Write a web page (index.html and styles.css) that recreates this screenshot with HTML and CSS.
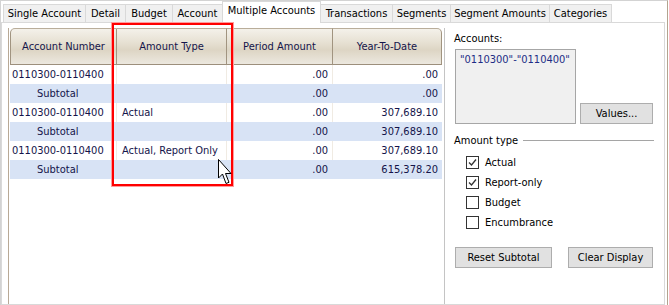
FILE: index.html
```html
<!DOCTYPE html>
<html>
<head>
    <title>Multiple Accounts</title>
    <link rel="stylesheet" href="styles.css">
</head>
<body>
    <div class="window">
        <div class="tabs">
            <div class="tab w-single">Single Account</div>
            <div class="tab w-detail">Detail</div>
            <div class="tab w-budget">Budget</div>
            <div class="tab w-account">Account</div>
            <div class="tab active w-multi">Multiple Accounts</div>
            <div class="tab w-trans">Transactions</div>
            <div class="tab w-seg">Segments</div>
            <div class="tab w-segamt">Segment Amounts</div>
            <div class="tab w-cat">Categories</div>
        </div>

        <div class="panel">
            <div class="grid-area">
                <table class="grid">
                    <tr class="head">
                        <th class="c1 first">Account Number</th>
                        <th class="c2">Amount Type</th>
                        <th class="c3">Period Amount</th>
                        <th class="c4 last">Year-To-Date</th>
                    </tr>
                    <tr class="row">
                        <td>0110300-0110400</td>
                        <td class="type"></td>
                        <td class="num">.00</td>
                        <td class="num">.00</td>
                    </tr>
                    <tr class="row subtotal">
                        <td class="sub">Subtotal</td>
                        <td></td>
                        <td class="num">.00</td>
                        <td class="num">.00</td>
                    </tr>
                    <tr class="row">
                        <td>0110300-0110400</td>
                        <td class="type">Actual</td>
                        <td class="num">.00</td>
                        <td class="num">307,689.10</td>
                    </tr>
                    <tr class="row subtotal">
                        <td class="sub">Subtotal</td>
                        <td></td>
                        <td class="num">.00</td>
                        <td class="num">307,689.10</td>
                    </tr>
                    <tr class="row">
                        <td>0110300-0110400</td>
                        <td class="type">Actual, Report Only</td>
                        <td class="num">.00</td>
                        <td class="num">307,689.10</td>
                    </tr>
                    <tr class="row subtotal">
                        <td class="sub">Subtotal</td>
                        <td></td>
                        <td class="num">.00</td>
                        <td class="num">615,378.20</td>
                    </tr>
                </table>
            </div>

            <div class="side">
                <div class="label">Accounts:</div>
                <div class="accounts-row">
                    <div class="listbox">"0110300"-"0110400"</div>
                    <button class="btn values">Values...</button>
                </div>

                <div class="group-title">
                    <span>Amount type</span>
                    <div class="rule"></div>
                </div>
                <div class="checks">
                    <div class="check">
                        <svg class="box" width="13" height="13" viewBox="0 0 13 13">
                            <rect x="0.5" y="0.5" width="12" height="12" fill="#fff" stroke="#333"/>
                            <polyline points="3,6.5 5.5,9 10,3.5" fill="none" stroke="#333" stroke-width="1.3"/>
                        </svg>
                        <span>Actual</span>
                    </div>
                    <div class="check">
                        <svg class="box" width="13" height="13" viewBox="0 0 13 13">
                            <rect x="0.5" y="0.5" width="12" height="12" fill="#fff" stroke="#333"/>
                            <polyline points="3,6.5 5.5,9 10,3.5" fill="none" stroke="#333" stroke-width="1.3"/>
                        </svg>
                        <span>Report-only</span>
                    </div>
                    <div class="check">
                        <svg class="box" width="13" height="13" viewBox="0 0 13 13">
                            <rect x="0.5" y="0.5" width="12" height="12" fill="#fff" stroke="#333"/>
                        </svg>
                        <span>Budget</span>
                    </div>
                    <div class="check">
                        <svg class="box" width="13" height="13" viewBox="0 0 13 13">
                            <rect x="0.5" y="0.5" width="12" height="12" fill="#fff" stroke="#333"/>
                        </svg>
                        <span>Encumbrance</span>
                    </div>
                </div>

                <div class="buttons">
                    <button class="btn reset">Reset Subtotal</button>
                    <button class="btn clear">Clear Display</button>
                </div>
            </div>
        </div>

        <!-- annotation drawn over the screenshot -->
        <div class="highlight"></div>
        <svg class="cursor" width="16" height="28" viewBox="0 0 16 28">
            <polygon points="0.5,0.5 0.5,19 4.5,15 8,24.5 11,23.3 7.5,14.5 13,14.5" fill="#fff" stroke="#000" stroke-width="1"/>
        </svg>
    </div>
</body>
</html>
```

FILE: styles.css
```css
body {
    margin: 0;
    background-color: #fff;
    font-family: "DejaVu Sans Condensed", "Liberation Sans", sans-serif;
    font-size: 11px;
    color: #000;
}

.window {
    position: relative;
    width: 668px;
    height: 305px;
    box-sizing: border-box;
    border-top: 1px solid #d3d3d3;
    border-left: 1px solid #d3d3d3;
    border-right: 1px solid #b3a48f;
    display: flex;
    flex-direction: column;
}

/* tab strip */
.tabs {
    display: flex;
    align-items: flex-end;
    height: 21px;
    padding-left: 2px;
    position: relative;
    z-index: 1;
}

.tab {
    box-sizing: border-box;
    height: 18px;
    line-height: 17px;
    text-align: center;
    background-color: #f0f0f0;
    border: 1px solid #d9d9d9;
    border-bottom: none;
    margin-right: -1px;
    white-space: nowrap;
}

.tab.active {
    height: 22px;
    line-height: 18px;
    background-color: #fff;
    margin-bottom: -1px;
    position: relative;
}

.w-single { width: 83px; }
.w-detail { width: 41px; }
.w-budget { width: 48px; }
.w-account { width: 51px; }
.w-multi { width: 99px; }
.w-trans { width: 73px; }
.w-seg { width: 59px; }
.w-segamt { width: 100px; }
.w-cat { width: 63px; }

/* tab page */
.panel {
    flex: 1;
    display: flex;
    border: 1px solid #d9d9d9;
    margin-right: 2px;
    min-height: 0;
}

.grid-area {
    width: 434px;
    margin-left: 6px;
    margin-top: 5px;
    padding-left: 1px;
    border-left: 1px solid #b8a996;
    border-right: 1px solid #c4c4c4;
}

.grid {
    border-collapse: separate;
    border-spacing: 0;
    width: 432px;
    table-layout: fixed;
    color: #14144a;
}

.head th {
    height: 37px;
    padding: 0;
    font-weight: normal;
    text-align: center;
    background: linear-gradient(#f4f1ea 0%, #e6e0d2 40%, #ddd5c4 60%, #ece8df 100%);
    border-top: 1px solid #b9ad9a;
    border-bottom: 1px solid #9c8f7c;
    border-right: 1px solid #a19480;
    box-sizing: border-box;
}

.head .first {
    border-left: 1px solid #a19480;
    border-top-left-radius: 5px;
}

.head .last {
    border-top-right-radius: 5px;
}

.c1 { width: 107px; }
.c2 { width: 110px; }
.c3 { width: 106px; }
.c4 { width: 109px; }

.row td {
    height: 19px;
    padding: 0 0 0 2px;
    white-space: nowrap;
    overflow: hidden;
    border-right: 1px solid #f0ebe3;
}

.row td:last-child {
    border-right: none;
}

.row td.type {
    padding-left: 5px;
}

.row td.num {
    text-align: right;
    padding: 0 4px 0 0;
}

.subtotal td {
    background-color: #d8e3f5;
    border-right-color: #d8e3f5;
}

.row td.sub {
    padding-left: 27px;
}

/* right side controls */
.side {
    flex: 1;
    padding: 9px 0 0 9px;
}

.label {
    line-height: 13px;
}

.accounts-row {
    display: flex;
    align-items: flex-end;
    margin-top: 4px;
}

.listbox {
    box-sizing: border-box;
    width: 121px;
    height: 75px;
    margin-left: 1px;
    padding: 3px 0 0 4px;
    background-color: #f0f0f0;
    border: 1px solid #a6a6a6;
    color: #1d2d86;
}

.btn {
    box-sizing: border-box;
    height: 21px;
    padding: 0;
    font-family: inherit;
    font-size: 11px;
    color: #000;
    background-color: #e1e1e1;
    border: 1px solid #adadad;
}

.values {
    width: 73px;
    margin-left: 4px;
}

.group-title {
    display: flex;
    align-items: center;
    height: 13px;
    margin-top: 10px;
    margin-right: 10px;
}

.rule {
    flex: 1;
    height: 1px;
    margin-left: 5px;
    margin-top: 1px;
    background-color: #a5a5a5;
    border-bottom: 1px solid #fff;
}

.checks {
    display: flex;
    flex-direction: column;
    gap: 7px;
    margin-top: 9px;
    padding-left: 12px;
}

.check {
    display: flex;
    align-items: center;
    height: 13px;
    gap: 6px;
}

.box {
    display: block;
}

.buttons {
    display: flex;
    gap: 16px;
    margin-top: 18px;
    margin-left: 1px;
}

.reset { width: 97px; }
.clear { width: 85px; }

/* red annotation box and mouse pointer */
.highlight {
    position: absolute;
    left: 111px;
    top: 22px;
    width: 117px;
    height: 159px;
    border: 2px solid #ff0000;
    box-shadow: 0 0 0 1px #ff9c9c;
    z-index: 2;
}

.cursor {
    position: absolute;
    left: 217px;
    top: 158px;
    z-index: 3;
}
```
